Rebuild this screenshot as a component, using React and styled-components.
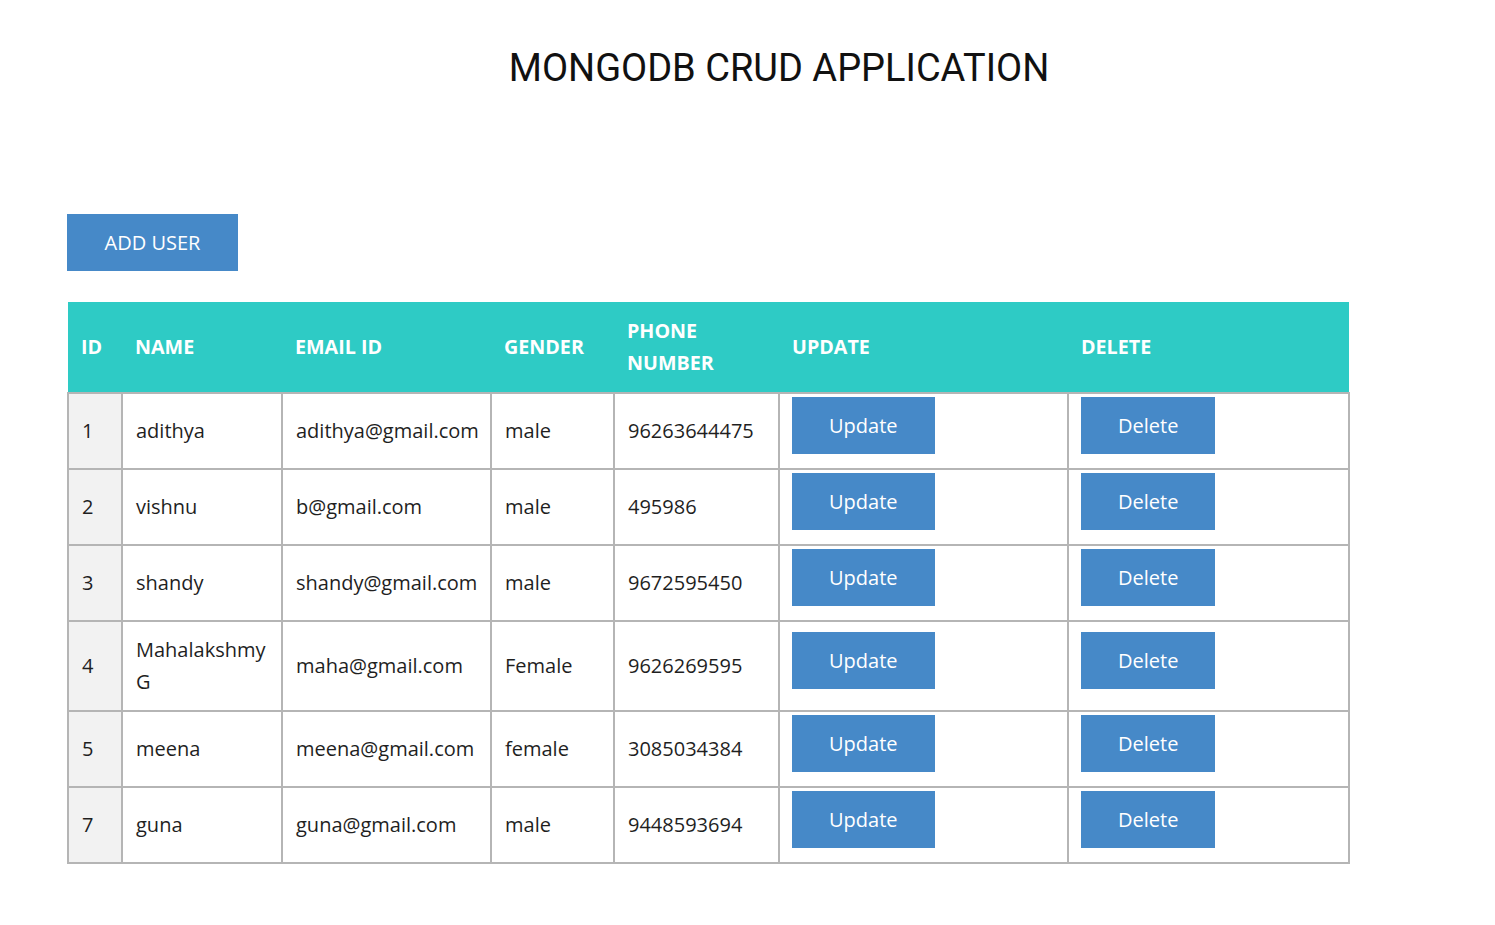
import React from 'react';
import styled, { createGlobalStyle } from 'styled-components';

const users = [
    { id: 1, name: 'adithya', email: 'adithya@gmail.com', gender: 'male', phone: '96263644475' },
    { id: 2, name: 'vishnu', email: 'b@gmail.com', gender: 'male', phone: '495986' },
    { id: 3, name: 'shandy', email: 'shandy@gmail.com', gender: 'male', phone: '9672595450' },
    { id: 4, name: 'Mahalakshmy G', email: 'maha@gmail.com', gender: 'Female', phone: '9626269595' },
    { id: 5, name: 'meena', email: 'meena@gmail.com', gender: 'female', phone: '3085034384' },
    { id: 7, name: 'guna', email: 'guna@gmail.com', gender: 'male', phone: '9448593694' },
];

const columns = [
    { label: 'ID', width: 54 },
    { label: 'NAME', width: 160 },
    { label: 'EMAIL ID', width: 209 },
    { label: 'GENDER', width: 123 },
    { label: 'PHONE NUMBER', width: 165 },
    { label: 'UPDATE', width: 289 },
    { label: 'DELETE', width: 281 },
];

export default function App() {
    return (
        <>
            <GlobalStyle />
            <StyledPage>
                <StyledTitle>MONGODB CRUD APPLICATION</StyledTitle>
                <StyledAddButton>ADD USER</StyledAddButton>
                <StyledTable>
                    <colgroup>
                        {columns.map(col => <col key={col.label} width={col.width} />)}
                    </colgroup>
                    <thead>
                        <tr>
                            {columns.map(col => <StyledHead key={col.label}>{col.label}</StyledHead>)}
                        </tr>
                    </thead>
                    <tbody>
                        {users.map(user => (
                            <tr key={user.id}>
                                <StyledCell $muted>{user.id}</StyledCell>
                                <StyledCell>{user.name}</StyledCell>
                                <StyledCell>{user.email}</StyledCell>
                                <StyledCell>{user.gender}</StyledCell>
                                <StyledCell>{user.phone}</StyledCell>
                                <StyledActionCell><StyledAction>Update</StyledAction></StyledActionCell>
                                <StyledActionCell><StyledAction>Delete</StyledAction></StyledActionCell>
                            </tr>
                        ))}
                    </tbody>
                </StyledTable>
            </StyledPage>
        </>
    )
}

const GlobalStyle = createGlobalStyle`
body {
    margin: 0;
    background: #fff;
    font-family: "Open Sans", "Liberation Sans", sans-serif;
    color: #222;
}
`
const StyledPage = styled.div`
padding: 0 0 40px 67px;
`
const StyledTitle = styled.h1`
margin: 0;
padding: 44px 4px 0 0;
text-align: center;
font-family: Roboto, "Liberation Sans", sans-serif;
font-weight: 400;
font-size: 38px;
line-height: 48px;
color: #111;
`
const StyledAddButton = styled.button`
display: block;
margin: 122px 0 31px;
height: 57px;
width: 171px;
padding: 0;
border: none;
background: #4689c8;
color: #fff;
font-family: "Open Sans", sans-serif;
font-size: 20px;
cursor: pointer;
`
const StyledTable = styled.table`
table-layout: fixed;
width: 1281px;
border-collapse: collapse;
`
const StyledHead = styled.th`
background: #2ecbc5;
color: #fff;
text-align: left;
font-weight: 700;
font-size: 19.7px;
line-height: 32px;
padding: 13px 13px;
`
const StyledCell = styled.td`
border: 2px solid #b5b5b5;
background: ${p => (p.$muted ? '#f2f2f2' : '#fff')};
font-size: 20px;
line-height: 32px;
padding: 12px 13px;
vertical-align: middle;
color: #1f1f1f;
`
const StyledActionCell = styled(StyledCell)`
padding: 3px 12px;
`
const StyledAction = styled.button`
display: block;
height: 57px;
margin-bottom: 11px;
padding: 0 37px;
border: none;
background: #4689c8;
color: #fff;
font-family: "Open Sans", sans-serif;
font-size: 20px;
cursor: pointer;
`
